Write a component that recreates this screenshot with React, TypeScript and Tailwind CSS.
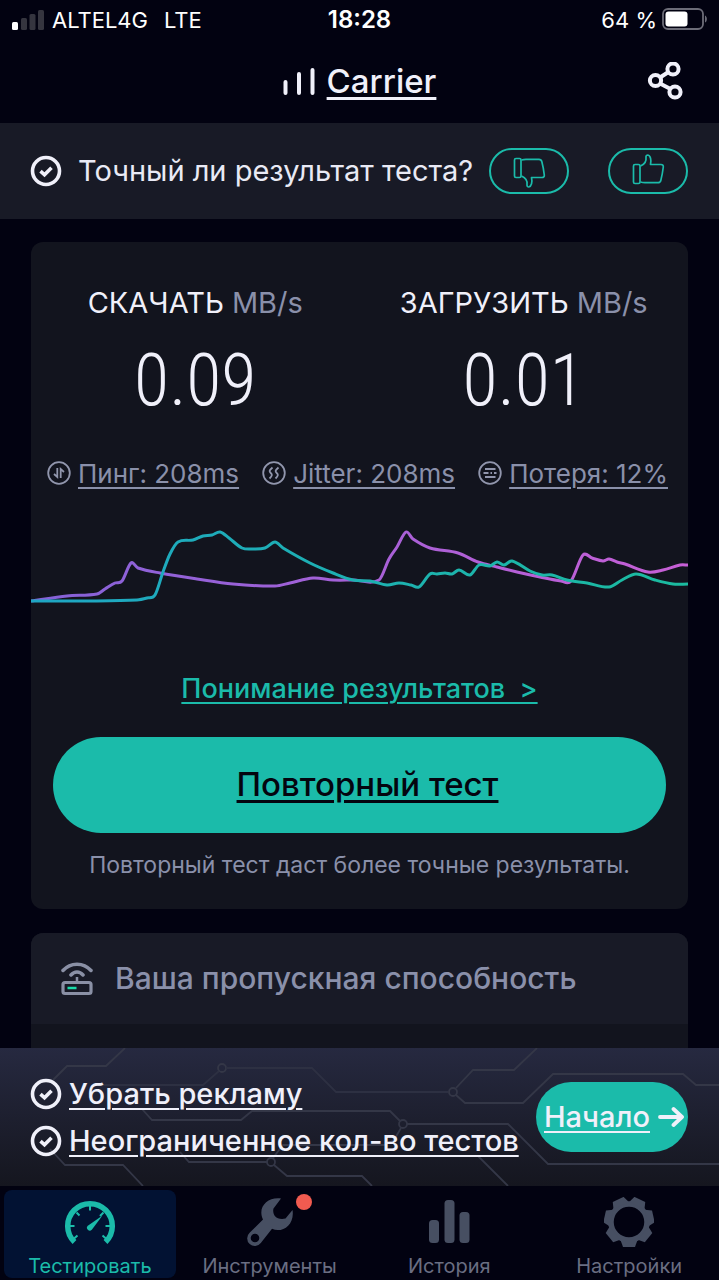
import React from 'react'

type Point = [number, number]

const DOWNLOAD: Point[] = [
  [0, 81], [60, 81], [106, 80], [116, 78], [124, 75], [132, 52], [139, 34], [147, 22], [162, 20], [172, 16],
  [181, 15], [189, 12], [198, 18], [211, 28], [222, 29], [234, 28], [244, 22], [252, 28], [279, 43], [302, 53],
  [322, 60], [339, 61], [356, 65], [368, 63], [380, 65], [388, 67], [399, 54], [406, 54], [414, 53], [421, 54],
  [428, 50], [439, 55], [448, 45], [459, 46], [466, 42], [473, 45], [481, 41], [499, 51], [511, 55], [521, 55],
  [536, 60], [556, 63], [578, 67], [591, 60], [605, 54], [624, 60], [642, 64], [657, 64]
]

const UPLOAD: Point[] = [
  [0, 81], [36, 76], [66, 74], [74, 69], [84, 63], [91, 61], [100, 43], [107, 48], [129, 53], [166, 59],
  [202, 64], [244, 66], [259, 63], [282, 58], [302, 60], [322, 60], [348, 60], [358, 39], [366, 27], [375, 12],
  [382, 19], [399, 28], [427, 33], [447, 42], [466, 47], [486, 52], [509, 57], [530, 61], [540, 61], [552, 35],
  [561, 38], [572, 41], [578, 39], [586, 42], [594, 44], [617, 52], [632, 50], [649, 45], [657, 45]
]

// Catmull-Rom style smoothing, written out as bezier segments
function smoothPath(points: Point[]): string {
  let d = `M${points[0][0]} ${points[0][1]}`
  for (let i = 0; i < points.length - 1; i++) {
    const p0 = points[i - 1] ?? points[i]
    const p1 = points[i]
    const p2 = points[i + 1]
    const p3 = points[i + 2] ?? p2
    const third = (p2[0] - p1[0]) / 3
    const m1 = (p2[1] - p0[1]) / (p2[0] - p0[0])
    const m2 = (p3[1] - p1[1]) / (p3[0] - p1[0])
    d += `C${p1[0] + third} ${p1[1] + m1 * third} ${p2[0] - third} ${p2[1] - m2 * third} ${p2[0]} ${p2[1]}`
  }
  return d
}

function CheckCircle() {
  return (
    <svg viewBox="0 0 32 32" className="h-8 w-8 shrink-0" fill="none" stroke="#f0f0fa" aria-hidden="true">
      <circle cx="16" cy="16" r="13.5" strokeWidth="3.6" />
      <path d="M10.5 16.2l4 3.6 7-7" strokeWidth="3.6" />
    </svg>
  )
}

function ThumbIcon({ down = false }: { down?: boolean }) {
  return (
    <svg
      viewBox="0 0 34 34"
      className="h-[34px] w-[34px]"
      fill="none"
      stroke="#1bbbaa"
      strokeWidth="1.7"
      strokeLinejoin="round"
      aria-hidden="true"
    >
      <g transform={down ? 'matrix(1 0 0 -1 0 34)' : undefined}>
        <rect x="2.5" y="10.5" width="6.5" height="19" rx="1.5" />
        <path d="M9.500 12C14 10 15.500 7 15 3.500C14.800 1.500 15.800 1 16.800 1C19.500 1.500 20.500 6 19.500 10.500H30c1.500 0 2.500 1 2.300 2.500C31.800 17 31 22 29.800 26.500c-.4 1.500-1.300 2.200-2.800 2.200H14c-1.500 0-3-.2-4.500-.7" />
      </g>
    </svg>
  )
}

function PingIcon() {
  return (
    <svg viewBox="0 0 24 24" className="h-6 w-6 shrink-0" fill="none" stroke="#9196ad" strokeWidth="1.8" aria-hidden="true">
      <circle cx="12" cy="12" r="10.8" />
      <path d="M10.300 7v9L7 13M13.700 17V8L17 11" />
    </svg>
  )
}

function JitterIcon() {
  return (
    <svg viewBox="0 0 24 24" className="h-6 w-6 shrink-0" fill="none" stroke="#9196ad" strokeWidth="1.8" aria-hidden="true">
      <circle cx="12" cy="12" r="10.8" />
      <path d="M10.500 6.500C7 9.500 7 10.500 8.700 12S10.500 14.500 7.500 17.500M16.500 6.500C13 9.500 13 10.500 14.700 12S16.500 14.500 13.500 17.500" />
    </svg>
  )
}

function LossIcon() {
  return (
    <svg viewBox="0 0 24 24" className="h-6 w-6 shrink-0" fill="none" stroke="#9196ad" strokeWidth="1.8" aria-hidden="true">
      <circle cx="12" cy="12" r="10.8" />
      <path d="M7 8h10.500M5.500 12h5M12.500 12h1.500M16 12h2.500M7 16h10.500" />
    </svg>
  )
}

function StatusBar() {
  return (
    <div className="grid h-10 grid-cols-[1fr_auto_1fr] items-center px-3 text-[22px] text-white">
      <div className="flex items-center gap-2">
        <svg viewBox="0 0 32 20" className="h-5 w-8" aria-hidden="true">
          <rect x="0" y="12" width="6" height="8" rx="1.5" fill="#fff" />
          <rect x="9" y="8" width="6" height="12" rx="1.5" fill="#35353f" />
          <rect x="17.5" y="4" width="6" height="16" rx="1.5" fill="#35353f" />
          <rect x="26" y="0" width="6" height="20" rx="1.5" fill="#35353f" />
        </svg>
        <span>ALTEL4G</span>
        <span className="ml-2">LTE</span>
      </div>
      <div className="text-center text-2xl font-semibold">18:28</div>
      <div className="flex items-center justify-end gap-1">
        <span>64 %</span>
        <svg viewBox="0 0 46 24" className="h-6 w-[46px]" aria-hidden="true">
          <rect x="2" y="1" width="40" height="20" rx="5" fill="none" stroke="#6c6c78" strokeWidth="1.8" />
          <rect x="4.5" y="3.5" width="22" height="15" rx="3" fill="#fff" />
          <path d="M44 7.500c2.500 1 2.500 6 0 7z" fill="#6c6c78" />
        </svg>
      </div>
    </div>
  )
}

function Header() {
  return (
    <header className="grid h-[83px] grid-cols-[1fr_auto_1fr] items-center px-8 text-[#f0f0fa]">
      <div className="col-start-2 flex items-center gap-3">
        <svg viewBox="0 0 32 28" className="h-7 w-8" stroke="#f0f0fa" strokeWidth="4" strokeLinecap="round" aria-hidden="true">
          <path d="M2.500 14v11M16 6v19M29.500 2v23" />
        </svg>
        <a href="#carrier" className="text-[33px] font-medium underline decoration-3 underline-offset-4">
          Carrier
        </a>
      </div>
      <button type="button" aria-label="Поделиться" className="justify-self-end">
        <svg viewBox="0 0 40 40" className="h-10 w-10" fill="none" stroke="#f0f0fa" strokeWidth="4" aria-hidden="true">
          <circle cx="8.5" cy="18.5" r="5.6" />
          <circle cx="26" cy="7" r="5.6" />
          <circle cx="28" cy="30" r="5.6" />
          <path d="M13 15.500l8.500-5.500M13 21.500l10.500 5.500" />
        </svg>
      </button>
    </header>
  )
}

function Feedback() {
  return (
    <section className="flex h-24 items-center justify-between bg-[#181a26] pr-[31px] pl-[30px]">
      <div className="flex items-center gap-4 text-[29px] whitespace-nowrap text-[#e9eaf5]">
        <CheckCircle />
        <span>Точный ли результат теста?</span>
      </div>
      <div className="flex gap-[39px]">
        <button
          type="button"
          aria-label="Нет"
          className="flex h-[46px] w-20 items-center justify-center rounded-full border-2 border-[#1bbbaa]"
        >
          <ThumbIcon down />
        </button>
        <button
          type="button"
          aria-label="Да"
          className="flex h-[46px] w-20 items-center justify-center rounded-full border-2 border-[#1bbbaa]"
        >
          <ThumbIcon />
        </button>
      </div>
    </section>
  )
}

function Speed({ label, value }: { label: string; value: string }) {
  return (
    <div className="flex flex-col items-center">
      <div className="text-[29px] leading-[44px] whitespace-nowrap text-[#f0f0fa]">
        {label} <span className="text-[#8a90aa]">MB/s</span>
      </div>
      <div className="font-['Roboto_Condensed','Liberation_Sans_Narrow',Roboto,sans-serif] text-[72px] leading-[112px] font-light text-[#f0f0fa]">
        {value}
      </div>
    </div>
  )
}

function Metric({ icon, children }: { icon: React.ReactNode; children: React.ReactNode }) {
  return (
    <a href="#details" className="flex items-center gap-[7px] text-[#8a90aa]">
      {icon}
      <span className="underline decoration-2 underline-offset-4">{children}</span>
    </a>
  )
}

function Chart() {
  return (
    <svg
      viewBox="0 0 657 100"
      preserveAspectRatio="none"
      className="mt-[11px] h-[100px] w-full"
      fill="none"
      strokeWidth="3"
      role="img"
      aria-label="График скорости"
    >
      <defs>
        <linearGradient id="upload" gradientUnits="userSpaceOnUse" x1="0" y1="0" x2="657" y2="0">
          <stop offset="0" stopColor="#8462d8" />
          <stop offset="1" stopColor="#c75fd6" />
        </linearGradient>
        <linearGradient id="download" gradientUnits="userSpaceOnUse" x1="0" y1="0" x2="657" y2="0">
          <stop offset="0" stopColor="#1fa6c4" />
          <stop offset="1" stopColor="#1bbb9f" />
        </linearGradient>
      </defs>
      <path d={smoothPath(UPLOAD)} stroke="url(#upload)" />
      <path d={smoothPath(DOWNLOAD)} stroke="url(#download)" />
    </svg>
  )
}

function ResultCard() {
  return (
    <section className="flex flex-col items-center rounded-xl bg-[#12141e] pt-[39px] pb-7">
      <div className="grid w-full grid-cols-2">
        <Speed label="СКАЧАТЬ" value="0.09" />
        <Speed label="ЗАГРУЗИТЬ" value="0.01" />
      </div>
      <div className="flex h-[72px] w-full items-center justify-between pr-5 pl-4 text-[26px] whitespace-nowrap">
        <Metric icon={<PingIcon />}>Пинг: 208ms</Metric>
        <Metric icon={<JitterIcon />}>Jitter: 208ms</Metric>
        <Metric icon={<LossIcon />}>Потеря: 12%</Metric>
      </div>
      <Chart />
      <a
        href="#understanding"
        className="mt-[49px] text-[27px] leading-10 font-medium text-[#1bbbaa] underline decoration-2 underline-offset-4"
      >
        Понимание результатов &nbsp;&gt;
      </a>
      <div className="mt-7 w-full px-[22px]">
        <button
          type="button"
          className="h-24 w-full rounded-full bg-[#1bbbaa] pl-4 text-[33px] font-medium text-[#04050f] underline decoration-3 underline-offset-4"
        >
          Повторный тест
        </button>
      </div>
      <p className="mt-4 text-[23px] leading-8 whitespace-nowrap text-[#8a90aa]">
        Повторный тест даст более точные результаты.
      </p>
    </section>
  )
}

function BandwidthCard() {
  return (
    <section className="mt-6 min-h-40 overflow-hidden rounded-xl bg-[#12141e]">
      <h2 className="flex h-[91px] items-center gap-[22px] bg-[#181a26] px-[30px] text-[30px] font-medium whitespace-nowrap text-[#8a90aa]">
        <svg viewBox="0 0 32 34" className="h-[34px] w-8 shrink-0" fill="none" stroke="#8a90a5" strokeWidth="3.5" aria-hidden="true">
          <path d="M2 8.500C9.500 0 22.500 0 30 8.500M10 13c3.500-4 8.500-4 12 0" strokeLinecap="round" />
          <path d="M16 15v6" strokeWidth="2.5" />
          <rect x="2" y="20.5" width="28" height="11" rx="2" strokeWidth="3.2" />
          <path d="M6.500 26h9" stroke="#1bdcaa" strokeWidth="2.5" />
        </svg>
        Ваша пропускная способность
      </h2>
    </section>
  )
}

function Promo() {
  return (
    <section className="relative h-[138px] shrink-0 bg-linear-to-b from-[#262940] to-[#15161f]">
      <svg
        viewBox="0 0 719 138"
        preserveAspectRatio="none"
        className="absolute inset-0 h-full w-full"
        fill="none"
        stroke="#343747"
        strokeWidth="1.8"
        aria-hidden="true"
      >
        <path d="M53 32L67 18h39L125 0" />
        <circle cx="222" cy="20" r="4" />
        <path d="M226 20h86l24 24h112M219 23l-16 14H100" stroke="#2d3042" />
        <circle cx="453" cy="44" r="4" />
        <path d="M456 40l17-18h41L537 0M456 47l9 8h58l30-29h130l13 11h23" />
        <path d="M142 61l10 11h89l11-9h138l10 10" />
        <circle cx="403" cy="76" r="4" />
        <path d="M407 76h101l40 40h171M401 80l-7 12-10 5H283l-10 13" />
        <path d="M50 101l15 16h58l20 21M180 104l9 10h78M274 117l13 11h75l10 10M478 108l30 30" />
        <circle cx="271" cy="114" r="4" />
      </svg>
      <div className="relative flex h-full items-center justify-between pr-[31px] pl-[30px]">
        <ul className="flex flex-col gap-[7px] text-[29px] leading-10 font-medium whitespace-nowrap text-[#f0f0fa]">
          <li className="flex items-center gap-[7px]">
            <CheckCircle />
            <a href="#no-ads" className="underline decoration-2 underline-offset-4">Убрать рекламу</a>
          </li>
          <li className="flex items-center gap-[7px]">
            <CheckCircle />
            <a href="#unlimited" className="underline decoration-2 underline-offset-4">Неограниченное кол-во тестов</a>
          </li>
        </ul>
        <button
          type="button"
          className="flex h-[70px] w-[152px] shrink-0 items-center justify-end gap-2 rounded-full bg-[#1bbbaa] pr-1 text-[29px] font-medium text-[#f0f0fa]"
        >
          <span className="underline decoration-2 underline-offset-4">Начало</span>
          <svg
            viewBox="0 0 26 22"
            className="h-[22px] w-[26px] shrink-0"
            fill="none"
            stroke="#f0f0fa"
            strokeWidth="3.8"
            strokeLinecap="round"
            strokeLinejoin="round"
            aria-hidden="true"
          >
            <path d="M2 11h22M15.500 3l8.500 8-8.500 8" />
          </svg>
        </button>
      </div>
    </section>
  )
}

function GaugeIcon() {
  return (
    <svg viewBox="0 0 52 46" className="h-[46px] w-[52px]" fill="none" stroke="#1bbbaa" aria-hidden="true">
      <path d="M10.500 43A22.300 22.300 0 1 1 41.500 43" strokeWidth="5.5" />
      <path d="M26 6v5.500M12.500 13.500l3 3M39.500 13.500l-3.500 3.500M5 27h5.500M41.500 27h5.500M9.500 40l4-3.500M42.500 40l-4-3.500" strokeWidth="2" />
      <path d="M38.500 16.500L23.800 26.800a2.800 2.800 0 0 0 4 4z" fill="#1bbbaa" stroke="none" />
    </svg>
  )
}

function WrenchIcon() {
  return (
    <svg viewBox="0 0 48 48" className="h-12 w-12" fill="#474f62" aria-hidden="true">
      <path
        fillRule="evenodd"
        d="M35 .5C22-1.500 11 9 17 21.500L3.600 34.800A7.600 7.600 0 1 0 14.800 45L26 30.800C36 35.500 49 27 46.500 12L39.500 20.500C35 21.500 31 20.500 29.300 18.500C27.300 16 26.800 13 27.500 10.500zM9 35.700a4.300 4.300 0 1 1 0 8.600 4.300 4.300 0 0 1 0-8.600z"
      />
    </svg>
  )
}

function BarsIcon() {
  return (
    <svg viewBox="0 0 42 44" className="h-11 w-[42px]" fill="#474f62" aria-hidden="true">
      <rect x="1" y="20" width="10" height="23" rx="3.5" />
      <rect x="16.5" y="0" width="10" height="43" rx="3.5" />
      <rect x="31.5" y="12" width="10" height="31" rx="3.5" />
    </svg>
  )
}

const GEAR_TEETH = 7

function GearIcon() {
  return (
    <svg viewBox="-25 -25 50 50" className="h-[50px] w-[50px]" fill="#474f62" aria-hidden="true">
      <circle r="18" fill="none" stroke="#474f62" strokeWidth="5.5" />
      {Array.from({ length: GEAR_TEETH }, (_, i) => (
        <path key={i} d="M-8.500 18L-6 25H6L8.500 18z" transform={`rotate(${(i * 360) / GEAR_TEETH})`} />
      ))}
    </svg>
  )
}

const TABS = [
  { label: 'Тестировать', icon: <GaugeIcon />, active: true },
  { label: 'Инструменты', icon: <WrenchIcon />, badge: true },
  { label: 'История', icon: <BarsIcon /> },
  { label: 'Настройки', icon: <GearIcon /> }
]

function TabBar() {
  return (
    <nav className="grid h-[94px] shrink-0 grid-cols-4 py-1">
      {TABS.map((tab) => (
        <button
          key={tab.label}
          type="button"
          className={`mx-1 flex flex-col items-center rounded-lg text-[20px] leading-6 ${
            tab.active ? 'bg-[#021233] text-[#1bbbaa]' : 'text-[#6a6e82]'
          }`}
        >
          <span className="relative flex h-16 items-center justify-center">
            {tab.icon}
            {tab.badge && <span className="absolute top-1 -right-[18px] h-4 w-4 rounded-full bg-[#f15b50]" />}
          </span>
          <span>{tab.label}</span>
        </button>
      ))}
    </nav>
  )
}

export default function App() {
  return (
    <div className="flex h-screen flex-col overflow-hidden bg-[#020211] font-[Inter,'Liberation_Sans',sans-serif]">
      <StatusBar />
      <Header />
      <Feedback />
      <main className="min-h-0 flex-1 overflow-y-auto px-[31px] pt-[23px] [scrollbar-width:none]">
        <ResultCard />
        <BandwidthCard />
      </main>
      <Promo />
      <TabBar />
    </div>
  )
}
